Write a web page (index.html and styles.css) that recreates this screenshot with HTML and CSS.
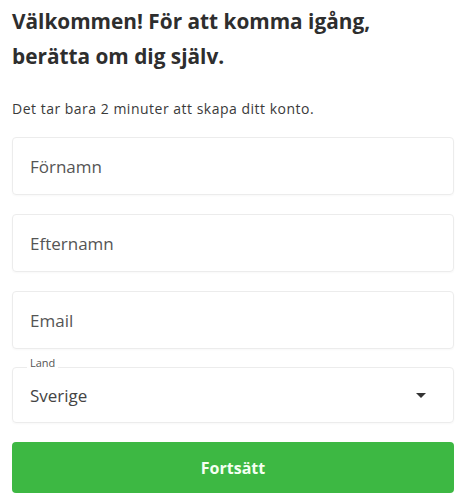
FILE: index.html
```html
<!DOCTYPE html>
<html lang="sv">
<head>
<meta charset="utf-8">
<title>Välkommen</title>
<link rel="stylesheet" href="styles.css">
</head>
<body>
<main class="page">
  <h1 class="title">Välkommen! För att komma igång, berätta om dig själv.</h1>
  <p class="lead">Det tar bara 2 minuter att skapa ditt konto.</p>
  <form class="form">
    <div class="field"><span class="placeholder">Förnamn</span></div>
    <div class="field"><span class="placeholder">Efternamn</span></div>
    <div class="field"><span class="placeholder">Email</span></div>
    <div class="field select">
      <span class="select-label">Land</span>
      <span class="placeholder value">Sverige</span>
      <svg class="caret" width="10" height="5" viewBox="0 0 10 5"><path d="M0 0 L10 0 L5 5 Z" fill="#333"/></svg>
    </div>
    <button type="button" class="submit">Fortsätt</button>
  </form>
</main>
</body>
</html>
```
FILE: styles.css
```css
html, body {
  margin: 0;
  padding: 0;
  background: #ffffff;
}
.page {
  padding: 4px 12px 0 12px;
  font-family: "Open Sans", "Noto Sans", sans-serif;
  color: #333;
}
.title {
  margin: 0;
  font-size: 20.8px;
  line-height: 35px;
  font-weight: 700;
  color: #2e2e2e;
  width: 390px;
}
.lead {
  margin: 26px 0 0 0;
  font-size: 14px;
  letter-spacing: 0.5px;
  line-height: 18px;
  color: #3a3a3a;
}
.form {
  margin-top: 19px;
  display: flex;
  flex-direction: column;
}
.field {
  box-sizing: border-box;
  height: 58px;
  margin-bottom: 19px;
  border: 1px solid #ececec;
  border-radius: 4px;
  box-shadow: 0 1px 2px rgba(0,0,0,0.03);
  display: flex;
  align-items: center;
  padding-left: 17px;
}
.placeholder {
  font-size: 17px;
  color: #555;
}
.select {
  position: relative;
  height: 56px;
  margin-top: -1px;
  justify-content: space-between;
  padding-right: 27px;
}
.select-label {
  position: absolute;
  left: 14px;
  top: -12px;
  padding: 0 3px;
  background: #ffffff;
  font-size: 11px;
  line-height: 14px;
  color: #555;
}
.value {
  color: #444;
}
.submit {
  height: 51px;
  border: none;
  border-radius: 4px;
  background: #3db843;
  color: #f4fff2;
  font-family: "Open Sans", "Noto Sans", sans-serif;
  font-size: 16px;
  font-weight: 700;
  cursor: pointer;
}
```
